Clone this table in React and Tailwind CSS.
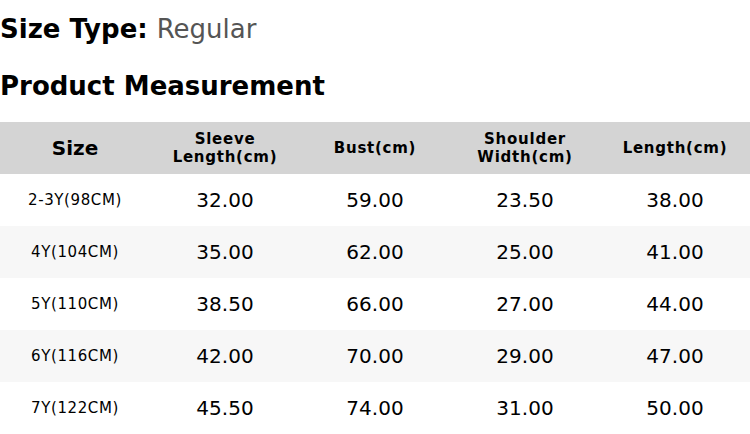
export default function App() {
  const rows = [
    ["2-3Y(98CM)", "32.00", "59.00", "23.50", "38.00"],
    ["4Y(104CM)", "35.00", "62.00", "25.00", "41.00"],
    ["5Y(110CM)", "38.50", "66.00", "27.00", "44.00"],
    ["6Y(116CM)", "42.00", "70.00", "29.00", "47.00"],
    ["7Y(122CM)", "45.50", "74.00", "31.00", "50.00"],
  ];
  return (
    <div className="w-[750px] h-[434px] bg-white overflow-hidden text-black" style={{ fontFamily: '"DejaVu Sans", sans-serif' }}>
      <div className="h-[57px] pt-[1px] flex items-center text-[26px] leading-none">
        <span className="font-bold">Size Type:</span>
        <span className="ml-[9px] text-[#555555]">Regular</span>
      </div>
      <div className="h-[56px] pt-[1px] flex items-center text-[26px] font-bold leading-none">Product Measurement</div>
      <div className="h-[9px]" />
      <div className="grid grid-cols-5 h-[52px] bg-[#d4d4d4] font-bold items-center text-center">
        <div className="text-[20px]">Size</div>
        <div className="text-[15px] leading-[18px] tracking-[0.75px]">Sleeve<br />Length(cm)</div>
        <div className="text-[15px] leading-[18px] tracking-[0.75px]">Bust(cm)</div>
        <div className="text-[15px] leading-[18px] tracking-[0.75px]">Shoulder<br />Width(cm)</div>
        <div className="text-[15px] leading-[18px] tracking-[0.75px]">Length(cm)</div>
      </div>
      {rows.map((r, i) => (
        <div key={i} className={`grid grid-cols-5 h-[52px] items-center text-center ${i % 2 === 1 ? "bg-[#f7f7f7]" : "bg-white"}`}>
          <div className="text-[15px] tracking-[0.6px]">{r[0]}</div>
          {r.slice(1).map((v, j) => (
            <div key={j} className="text-[20px]">{v}</div>
          ))}
        </div>
      ))}
    </div>
  );
}
